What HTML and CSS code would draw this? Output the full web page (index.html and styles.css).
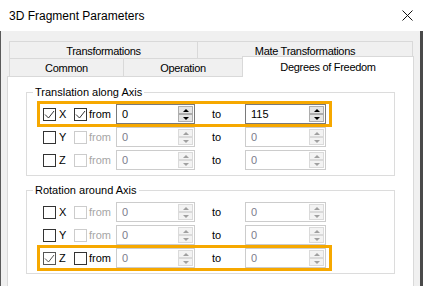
FILE: index.html
```html
<!DOCTYPE html>
<html lang="en">
<head>
    <meta charset="UTF-8">
    <title>3D Fragment Parameters</title>
    <link rel="stylesheet" href="styles.css">
</head>
<body>
    <div class="dialog">
        <div class="titlebar">
            <span class="title">3D Fragment Parameters</span>
            <span class="close">
                <svg width="11" height="11" viewBox="0 0 11 11"><path d="M0.5 0.5 L10.5 10.5 M10.5 0.5 L0.5 10.5" stroke="#111" stroke-width="1" fill="none"/></svg>
            </span>
        </div>

        <div class="client">
            <!-- Tabs: two rows, the front one holds the active tab -->
            <div class="tabs">
                <div class="tab-row back">
                    <div class="tab t-trans">Transformations</div>
                    <div class="tab t-mate last">Mate Transformations</div>
                </div>
                <div class="tab-row front">
                    <div class="tab t-common">Common</div>
                    <div class="tab t-op">Operation</div>
                    <div class="tab t-dof last active">Degrees of Freedom</div>
                </div>
            </div>

            <div class="panel">
                <fieldset class="group">
                    <legend>Translation along Axis</legend>

                    <div class="axis-row hl">
                        <div class="cb-cell"><span class="cb"><svg width="11" height="11" viewBox="0 0 11 11"><polyline points="1,5.5 4.5,9 10,2" fill="none" stroke="#333" stroke-width="1"/></svg></span><span class="axis">X</span></div>
                        <div class="cb-cell"><span class="cb"><svg width="11" height="11" viewBox="0 0 11 11"><polyline points="1,5.5 4.5,9 10,2" fill="none" stroke="#333" stroke-width="1"/></svg></span><span class="from">from</span></div>
                        <div class="field"><span class="val">0</span><div class="spin"><div class="btn up"></div><div class="btn down"></div></div></div>
                        <span class="to">to</span>
                        <div class="field"><span class="val">115</span><div class="spin"><div class="btn up"></div><div class="btn down"></div></div></div>
                    </div>

                    <div class="axis-row">
                        <div class="cb-cell"><span class="cb"></span><span class="axis">Y</span></div>
                        <div class="cb-cell"><span class="cb off"></span><span class="from off">from</span></div>
                        <div class="field off"><span class="val">0</span><div class="spin"><div class="btn up"></div><div class="btn down"></div></div></div>
                        <span class="to">to</span>
                        <div class="field off"><span class="val">0</span><div class="spin"><div class="btn up"></div><div class="btn down"></div></div></div>
                    </div>

                    <div class="axis-row">
                        <div class="cb-cell"><span class="cb"></span><span class="axis">Z</span></div>
                        <div class="cb-cell"><span class="cb off"></span><span class="from off">from</span></div>
                        <div class="field off"><span class="val">0</span><div class="spin"><div class="btn up"></div><div class="btn down"></div></div></div>
                        <span class="to">to</span>
                        <div class="field off"><span class="val">0</span><div class="spin"><div class="btn up"></div><div class="btn down"></div></div></div>
                    </div>
                </fieldset>

                <fieldset class="group second">
                    <legend>Rotation around Axis</legend>

                    <div class="axis-row">
                        <div class="cb-cell"><span class="cb"></span><span class="axis">X</span></div>
                        <div class="cb-cell"><span class="cb off"></span><span class="from off">from</span></div>
                        <div class="field off"><span class="val">0</span><div class="spin"><div class="btn up"></div><div class="btn down"></div></div></div>
                        <span class="to">to</span>
                        <div class="field off"><span class="val">0</span><div class="spin"><div class="btn up"></div><div class="btn down"></div></div></div>
                    </div>

                    <div class="axis-row">
                        <div class="cb-cell"><span class="cb"></span><span class="axis">Y</span></div>
                        <div class="cb-cell"><span class="cb off"></span><span class="from off">from</span></div>
                        <div class="field off"><span class="val">0</span><div class="spin"><div class="btn up"></div><div class="btn down"></div></div></div>
                        <span class="to">to</span>
                        <div class="field off"><span class="val">0</span><div class="spin"><div class="btn up"></div><div class="btn down"></div></div></div>
                    </div>

                    <div class="axis-row hl">
                        <div class="cb-cell"><span class="cb soft"><svg width="11" height="11" viewBox="0 0 11 11"><polyline points="1,5.5 4.5,9 10,2" fill="none" stroke="#555" stroke-width="1"/></svg></span><span class="axis">Z</span></div>
                        <div class="cb-cell"><span class="cb"></span><span class="from">from</span></div>
                        <div class="field off"><span class="val">0</span><div class="spin"><div class="btn up"></div><div class="btn down"></div></div></div>
                        <span class="to">to</span>
                        <div class="field off"><span class="val">0</span><div class="spin"><div class="btn up"></div><div class="btn down"></div></div></div>
                    </div>
                </fieldset>
            </div>
        </div>
    </div>
</body>
</html>
```

FILE: styles.css
```css
* {
    box-sizing: border-box;
}
body {
    margin: 0;
    font-family: "Liberation Sans", Arial, sans-serif;
    font-size: 11px;
    color: #000;
    background: #4a4a4a;
}
.dialog {
    width: 423px;
    height: 286px;
    overflow: hidden;
}
.titlebar {
    height: 31px;
    background: #fff;
    display: flex;
    align-items: center;
    justify-content: space-between;
    padding: 0 10px 0 9px;
}
.title {
    font-size: 12px;
}
.close svg {
    display: block;
}
.client {
    height: 255px;
    background: #f0f0f0;
    border-left: 1px solid #5a5a5a;
    border-right: 3px solid #4a4a4a;
    padding: 10px 0 0 6px;
}

/* tabs */
.tabs {
    margin-left: 2px;
}
.tab-row {
    display: flex;
    align-items: flex-start;
}
.tab {
    border-top: 1px solid #d9d9d9;
    border-left: 1px solid #d9d9d9;
    background: #f0f0f0;
    display: flex;
    align-items: center;
    justify-content: center;
    letter-spacing: -0.3px;
}
.tab.last {
    border-right: 1px solid #d9d9d9;
}
.back .tab { height: 17px; padding-top: 1px; }
.front .tab { height: 18px; padding-top: 1px; }
.t-trans { width: 188px; }
.t-mate { width: 216px; }
.t-common { width: 114px; }
.t-op { width: 119px; }
.t-dof { width: 172px; }
.tab.active {
    height: 21px;
    margin-top: -2px;
    margin-bottom: -1px;
    background: #fff;
    position: relative;
    z-index: 1;
    padding-top: 0;
}

/* page */
.panel {
    width: 407px;
    height: 220px;
    background: #fff;
    border: 1px solid #d9d9d9;
    padding-left: 18px;
}
.group {
    margin: 9px 0 0 0;
    width: 369px;
    min-width: 0;
    border: 1px solid #dcdcdc;
    padding: 5px 0 5px 0;
}
.group.second {
    margin-top: 8px;
}
.group legend {
    margin-left: 6px;
    padding: 0 2px;
    line-height: 13px;
}
.axis-row {
    display: grid;
    grid-template-columns: 31px 42px 79px 50px 81px;
    align-items: center;
    height: 20px;
    width: 289px;
    padding: 0 3px;
    margin-left: 13px;
}
.axis-row + .axis-row {
    margin-top: 3px;
}
.axis-row.hl {
    outline: 3px solid #f6a800;
}
.cb-cell {
    display: flex;
    align-items: center;
}
.cb {
    width: 13px;
    height: 13px;
    border: 1px solid #333;
    background: #fff;
    display: inline-block;
}
.cb svg {
    display: block;
}
.cb.off {
    border-color: #cccccc;
}
.cb.soft {
    border-color: #555;
}
.axis {
    margin-left: 3px;
}
.from {
    margin-left: 2px;
}
.from.off {
    color: #a6a6a6;
}
.to {
    padding-left: 17px;
}

/* spin edit */
.field {
    height: 20px;
    border: 1px solid #7a7a7a;
    background: #fff;
    display: flex;
}
.field.off {
    border-color: #cccccc;
    color: #7c7c8c;
}
.val {
    flex: 1;
    padding-left: 5px;
    line-height: 18px;
}
.spin {
    width: 15px;
    margin: 1px;
    display: flex;
    flex-direction: column;
}
.spin .btn {
    flex: 1;
    border: 1px solid #adadad;
    background: #e5e5e5;
    display: flex;
    align-items: center;
    justify-content: center;
}
.spin .btn::before {
    content: "";
    border-left: 3px solid transparent;
    border-right: 3px solid transparent;
}
.spin .up::before { border-bottom: 3px solid #000; }
.spin .down::before { border-top: 3px solid #000; }
.field.off .btn {
    border-color: #dadada;
    background: #f3f3f3;
}
.field.off .up::before { border-bottom-color: #a0a0a0; }
.field.off .down::before { border-top-color: #a0a0a0; }
```
